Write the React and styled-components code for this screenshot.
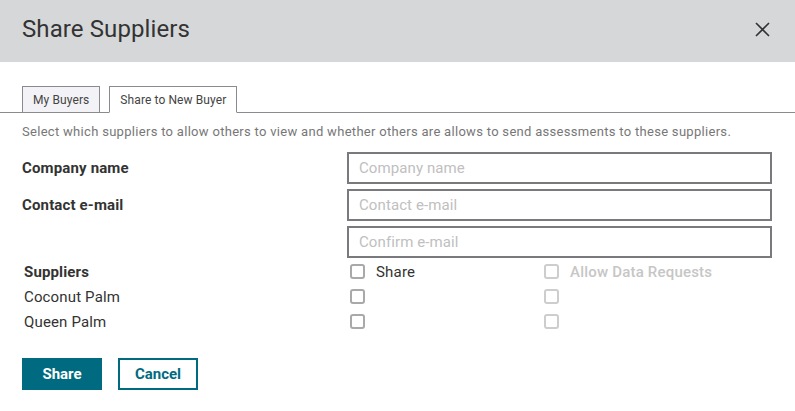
import React, { useState } from 'react'
import styled, { createGlobalStyle } from 'styled-components'

const Global = createGlobalStyle`
  html, body {
    margin: 0;
    padding: 0;
    background: #ffffff;
    font-family: Roboto, "Liberation Sans", Arial, sans-serif;
    color: #333333;
  }
  * { box-sizing: border-box; }
`

const Modal = styled.div`
  width: 795px;
  height: 411px;
  background: #ffffff;
  display: flex;
  flex-direction: column;
`

const Header = styled.div`
  height: 62px;
  background: #d6d7d9;
  display: flex;
  align-items: center;
  justify-content: space-between;
  padding: 0 24px 4px 22px;
`

const Title = styled.h1`
  margin: 0;
  font-size: 24px;
  font-weight: 400;
  letter-spacing: 0.1px;
  color: #333333;
`

const CloseButton = styled.button`
  border: none;
  background: transparent;
  padding: 0;
  width: 18px;
  height: 18px;
  display: flex;
  align-items: center;
  justify-content: center;
  cursor: pointer;
`

const Tabs = styled.div`
  margin-top: 24px;
  display: flex;
  align-items: flex-end;
  gap: 9px;
  padding-left: 22px;
  border-bottom: 1px solid #8a8a8f;
  height: 27px;
`

const Tab = styled.button`
  height: 27px;
  margin-bottom: -1px;
  padding: 0 10px;
  font-family: inherit;
  font-size: 12px;
  letter-spacing: 0.1px;
  color: #444444;
  border: 1px solid #8a8a8f;
  border-bottom-color: ${p => (p.$active ? '#ffffff' : '#8a8a8f')};
  background: ${p => (p.$active ? '#ffffff' : '#f3f3f7')};
  cursor: pointer;
`

const Body = styled.div`
  padding: 0 22px;
`

const Intro = styled.p`
  margin: 11px 0 13px;
  font-size: 13px;
  color: #777777;
  letter-spacing: 0.3px;
`

const FieldRow = styled.div`
  display: grid;
  grid-template-columns: 325px 1fr;
  align-items: center;
  margin-bottom: 5px;
`

const Label = styled.label`
  font-size: 15px;
  font-weight: 700;
  letter-spacing: 0.15px;
  color: #333333;
`

const Input = styled.input`
  width: 425px;
  height: 32px;
  border: 2px solid #79797e;
  padding: 0 10px;
  font-family: inherit;
  font-size: 15px;
  letter-spacing: 0.1px;
  color: #333333;
  outline: none;
  &::placeholder { color: #c0c0c0; }
`

const Grid = styled.div`
  display: grid;
  grid-template-columns: 326px 194px 1fr;
  grid-auto-rows: 25px;
  align-items: center;
  margin-top: -4px;
  padding-left: 2px;
`

const Cell = styled.div`
  font-size: 15px;
  font-weight: ${p => (p.$bold ? 700 : 400)};
  letter-spacing: 0.15px;
  color: #333333;
`

const Check = styled.label`
  display: flex;
  align-items: center;
  gap: 11px;
  font-size: 15px;
  letter-spacing: 0.2px;
  color: ${p => (p.$muted ? '#c6c6c6' : '#333333')};
  font-weight: ${p => (p.$muted ? 500 : 400)};
`

const Box = styled.span`
  width: 15px;
  height: 15px;
  border: 2px solid ${p => (p.$muted ? '#cdcdcd' : '#a9a9a9')};
  border-radius: 3px;
  background: ${p => (p.$on ? '#006b80' : '#ffffff')};
  flex-shrink: 0;
`

const Actions = styled.div`
  display: flex;
  gap: 16px;
  margin-top: 24px;
`

const Button = styled.button`
  width: 80px;
  height: 32px;
  font-family: inherit;
  font-size: 15px;
  font-weight: 700;
  border: 2px solid #006b80;
  background: ${p => (p.$primary ? '#006b80' : '#ffffff')};
  color: ${p => (p.$primary ? '#ffffff' : '#006b80')};
  cursor: pointer;
`

const suppliers = ['Coconut Palm', 'Queen Palm']

const App = () => {
  const [tab, setTab] = useState('new')

  return (
    <Modal>
      <Global />
      <Header>
        <Title>Share Suppliers</Title>
        <CloseButton aria-label="Close">
          <svg width="15" height="15" viewBox="0 0 15 15">
            <path d="M1 1 L14 14 M14 1 L1 14" stroke="#333" strokeWidth="1.6" />
          </svg>
        </CloseButton>
      </Header>

      <Tabs>
        <Tab $active={tab === 'mine'} onClick={() => setTab('mine')}>My Buyers</Tab>
        <Tab $active={tab === 'new'} onClick={() => setTab('new')}>Share to New Buyer</Tab>
      </Tabs>

      <Body>
        <Intro>Select which suppliers to allow others to view and whether others are allows to send assessments to these suppliers.</Intro>

        <FieldRow>
          <Label>Company name</Label>
          <Input placeholder="Company name" />
        </FieldRow>
        <FieldRow>
          <Label>Contact e-mail</Label>
          <Input placeholder="Contact e-mail" />
        </FieldRow>
        <FieldRow>
          <span />
          <Input placeholder="Confirm e-mail" />
        </FieldRow>

        <Grid>
          <Cell $bold>Suppliers</Cell>
          <Check><Box />Share</Check>
          <Check $muted><Box $muted />Allow Data Requests</Check>
          {suppliers.map(s => (
            <React.Fragment key={s}>
              <Cell>{s}</Cell>
              <Check><Box /></Check>
              <Check $muted><Box $muted /></Check>
            </React.Fragment>
          ))}
        </Grid>

        <Actions>
          <Button $primary>Share</Button>
          <Button>Cancel</Button>
        </Actions>
      </Body>
    </Modal>
  )
}

export default App
